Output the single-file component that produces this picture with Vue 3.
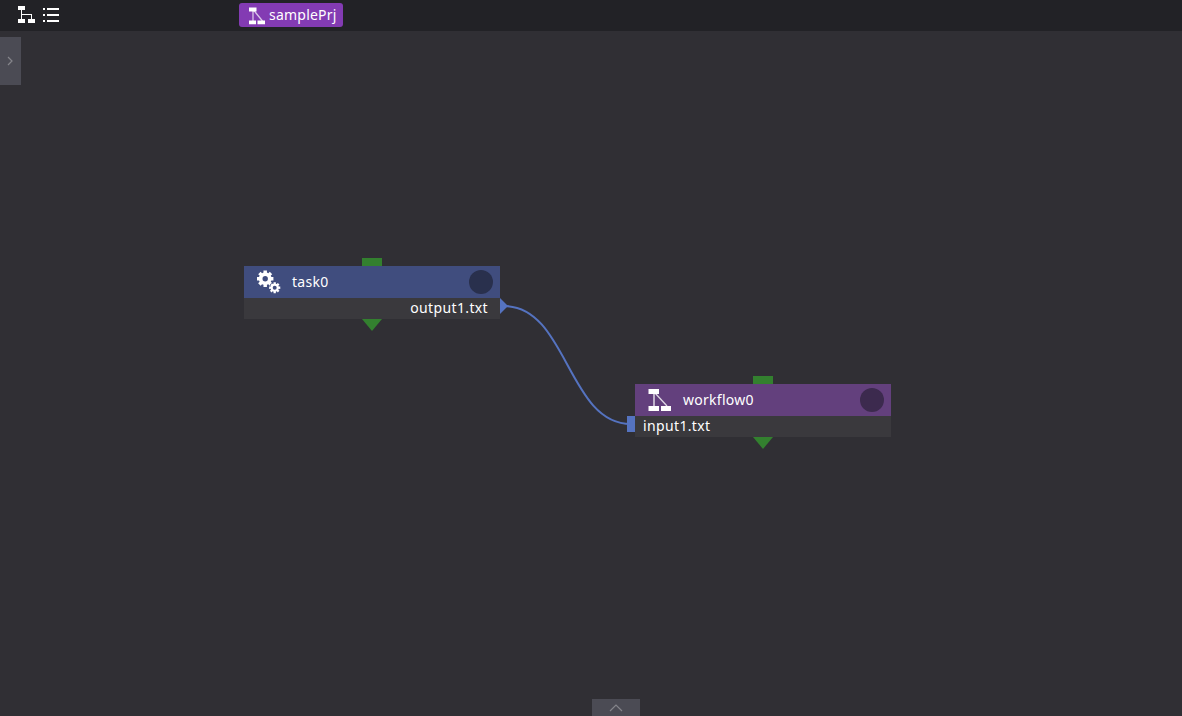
<script setup>
const gear = (cx, cy, ro, ri, hole) => {
  const pts = []
  for (let i = 0; i < 8; i++) {
    const base = (i * Math.PI) / 4
    for (const [r, a] of [[ri, -0.27], [ro, -0.21], [ro, 0.21], [ri, 0.27]]) {
      pts.push(`${(cx + r * Math.cos(base + a)).toFixed(2)} ${(cy + r * Math.sin(base + a)).toFixed(2)}`)
    }
  }
  return `M${pts.join('L')}ZM${cx - hole} ${cy}a${hole} ${hole} 0 1 0 ${2 * hole} 0a${hole} ${hole} 0 1 0 ${-2 * hole} 0Z`
}
const gears = gear(8.2, 8.7, 8.4, 6.4, 2.7) + gear(17.7, 17.7, 5.7, 4.2, 2)

const nodes = [
  { name: 'task0', kind: 'task', output: 'output1.txt' },
  { name: 'workflow0', kind: 'workflow', input: 'input1.txt' },
]
</script>

<template>
  <div class="app">
    <header class="bar">
      <div class="views">
        <svg width="18" height="18" viewBox="0 0 18 18">
          <path d="M0 0h7v4H0zM0 13h7v4H0zM10 13h7v4h-7zM3 4h1v9H3zM4 8h10v5h-1V9H4z" fill="#fff" />
        </svg>
        <svg width="16" height="18" viewBox="0 0 16 18">
          <path d="M0 2h2v2H0zM4 2h12v2H4zM0 8h2v2H0zM4 8h12v2H4zM0 14h2v2H0zM4 14h12v2H4z" fill="#fff" />
        </svg>
      </div>
      <div class="crumb">
        <svg width="17" height="18" viewBox="0 0 17 18">
          <path d="M5 3v12M5.500 3l9 11" stroke="#fff" stroke-opacity=".7" stroke-width="1.3" fill="none" />
          <path d="M1 .5h7.500v4H1zM1 13.500h7v3.700H1zM9.500 13.500H17v3.700H9.500z" fill="#fff" />
        </svg>
        <span>samplePrj</span>
      </div>
    </header>
    <main class="canvas">
      <button class="side" aria-label="Open side panel">
        <svg width="6" height="10" viewBox="0 0 6 10"><path d="M1 1l4 4-4 4" /></svg>
      </button>
      <svg class="link" width="127" height="122" viewBox="0 0 127 122">
        <path d="M0 2C63.500 2 63.500 120 127 120" fill="none" stroke="#5573c0" stroke-width="2" />
      </svg>
      <section v-for="n in nodes" :key="n.name" class="node" :class="n.kind">
        <i class="prev" /><i class="next" />
        <div class="head">
          <svg v-if="n.kind === 'task'" width="25" height="25" viewBox="0 0 25 25">
            <path :d="gears" fill="#fff" fill-rule="evenodd" />
          </svg>
          <svg v-else width="25" height="25" viewBox="0 0 25 25">
            <path d="M6 5v14" stroke="#fff" stroke-opacity=".6" stroke-width="2" />
            <path d="M7 5l12 13" stroke="#fff" stroke-opacity=".8" stroke-width="1.3" />
            <path d="M.5 1H11v5H.5zM.5 18H11v5H.5zM13 18h10v5H13z" fill="#fff" />
          </svg>
          <span class="name">{{ n.name }}</span>
          <span class="state" />
        </div>
        <div class="file"><span>{{ n.output || n.input }}</span></div>
        <i :class="n.output ? 'out' : 'in'" />
      </section>
      <button class="bottom" aria-label="Open log panel">
        <svg width="14" height="8" viewBox="0 0 14 8"><path d="M1 7l6-6 6 6" /></svg>
      </button>
    </main>
  </div>
</template>

<style>
body { margin: 0; overflow: hidden; }
</style>

<style scoped>
.app { height: 716px; display: flex; flex-direction: column; background: #302f34; color: #fff; font: 14px/20px "Noto Sans", "Open Sans", sans-serif; overflow: hidden; }
svg { display: block; flex: none; }
.bar { height: 31px; flex: none; display: flex; background: #222226; }
.views { width: 221px; padding: 6px 0 0 18px; display: flex; gap: 7px; }
.crumb { width: 95px; height: 24px; margin-top: 3px; padding-left: 9px; display: flex; align-items: center; gap: 4px; background: #833bb3; border-radius: 3px; letter-spacing: 0.22px; }
.crumb svg { margin-top: 2px; }
.canvas { flex: 1; position: relative; }
button { border: 0; padding: 0; display: flex; background: #4b4b54; }
button path { fill: none; stroke: #85858b; stroke-width: 1.2; }
.side { width: 21px; height: 48px; margin-top: 6px; align-items: center; padding-left: 7px; }
.bottom { position: absolute; left: 592px; bottom: 0; width: 48px; height: 17px; justify-content: center; align-items: center; }
.link { position: absolute; left: 504px; top: 273px; }
.node { position: absolute; width: 256px; height: 53px; background: #3a393d; }
.task { left: 244px; top: 235px; }
.workflow { left: 635px; top: 353px; }
.head { height: 32px; display: flex; align-items: center; padding: 0 7px 0 13px; box-sizing: border-box; }
.task .head { background: #404d7e; }
.workflow .head { background: #63407d; }
.name { margin-left: 10px; flex: 1; letter-spacing: 0.28px; }
.state { width: 24px; height: 24px; border-radius: 50%; background: #29304d; }
.workflow .state { background: #3c2a4e; }
.file { height: 21px; line-height: 20px; padding: 0 12px 0 8px; letter-spacing: 0.36px; }
.task .file { text-align: right; }
.prev, .next, .in, .out { position: absolute; }
.prev { left: 118px; top: -8px; width: 20px; height: 8px; background: #33802f; }
.next { left: 118px; top: 53px; width: 20px; height: 12px; background: #33802f; clip-path: polygon(0 0, 100% 0, 50% 100%); }
.in { left: -8px; top: 32px; width: 8px; height: 16px; background: #5573c0; }
.out { left: 256px; top: 32px; width: 8px; height: 16px; background: #5573c0; clip-path: polygon(0 0, 100% 50%, 0 100%); }
</style>
